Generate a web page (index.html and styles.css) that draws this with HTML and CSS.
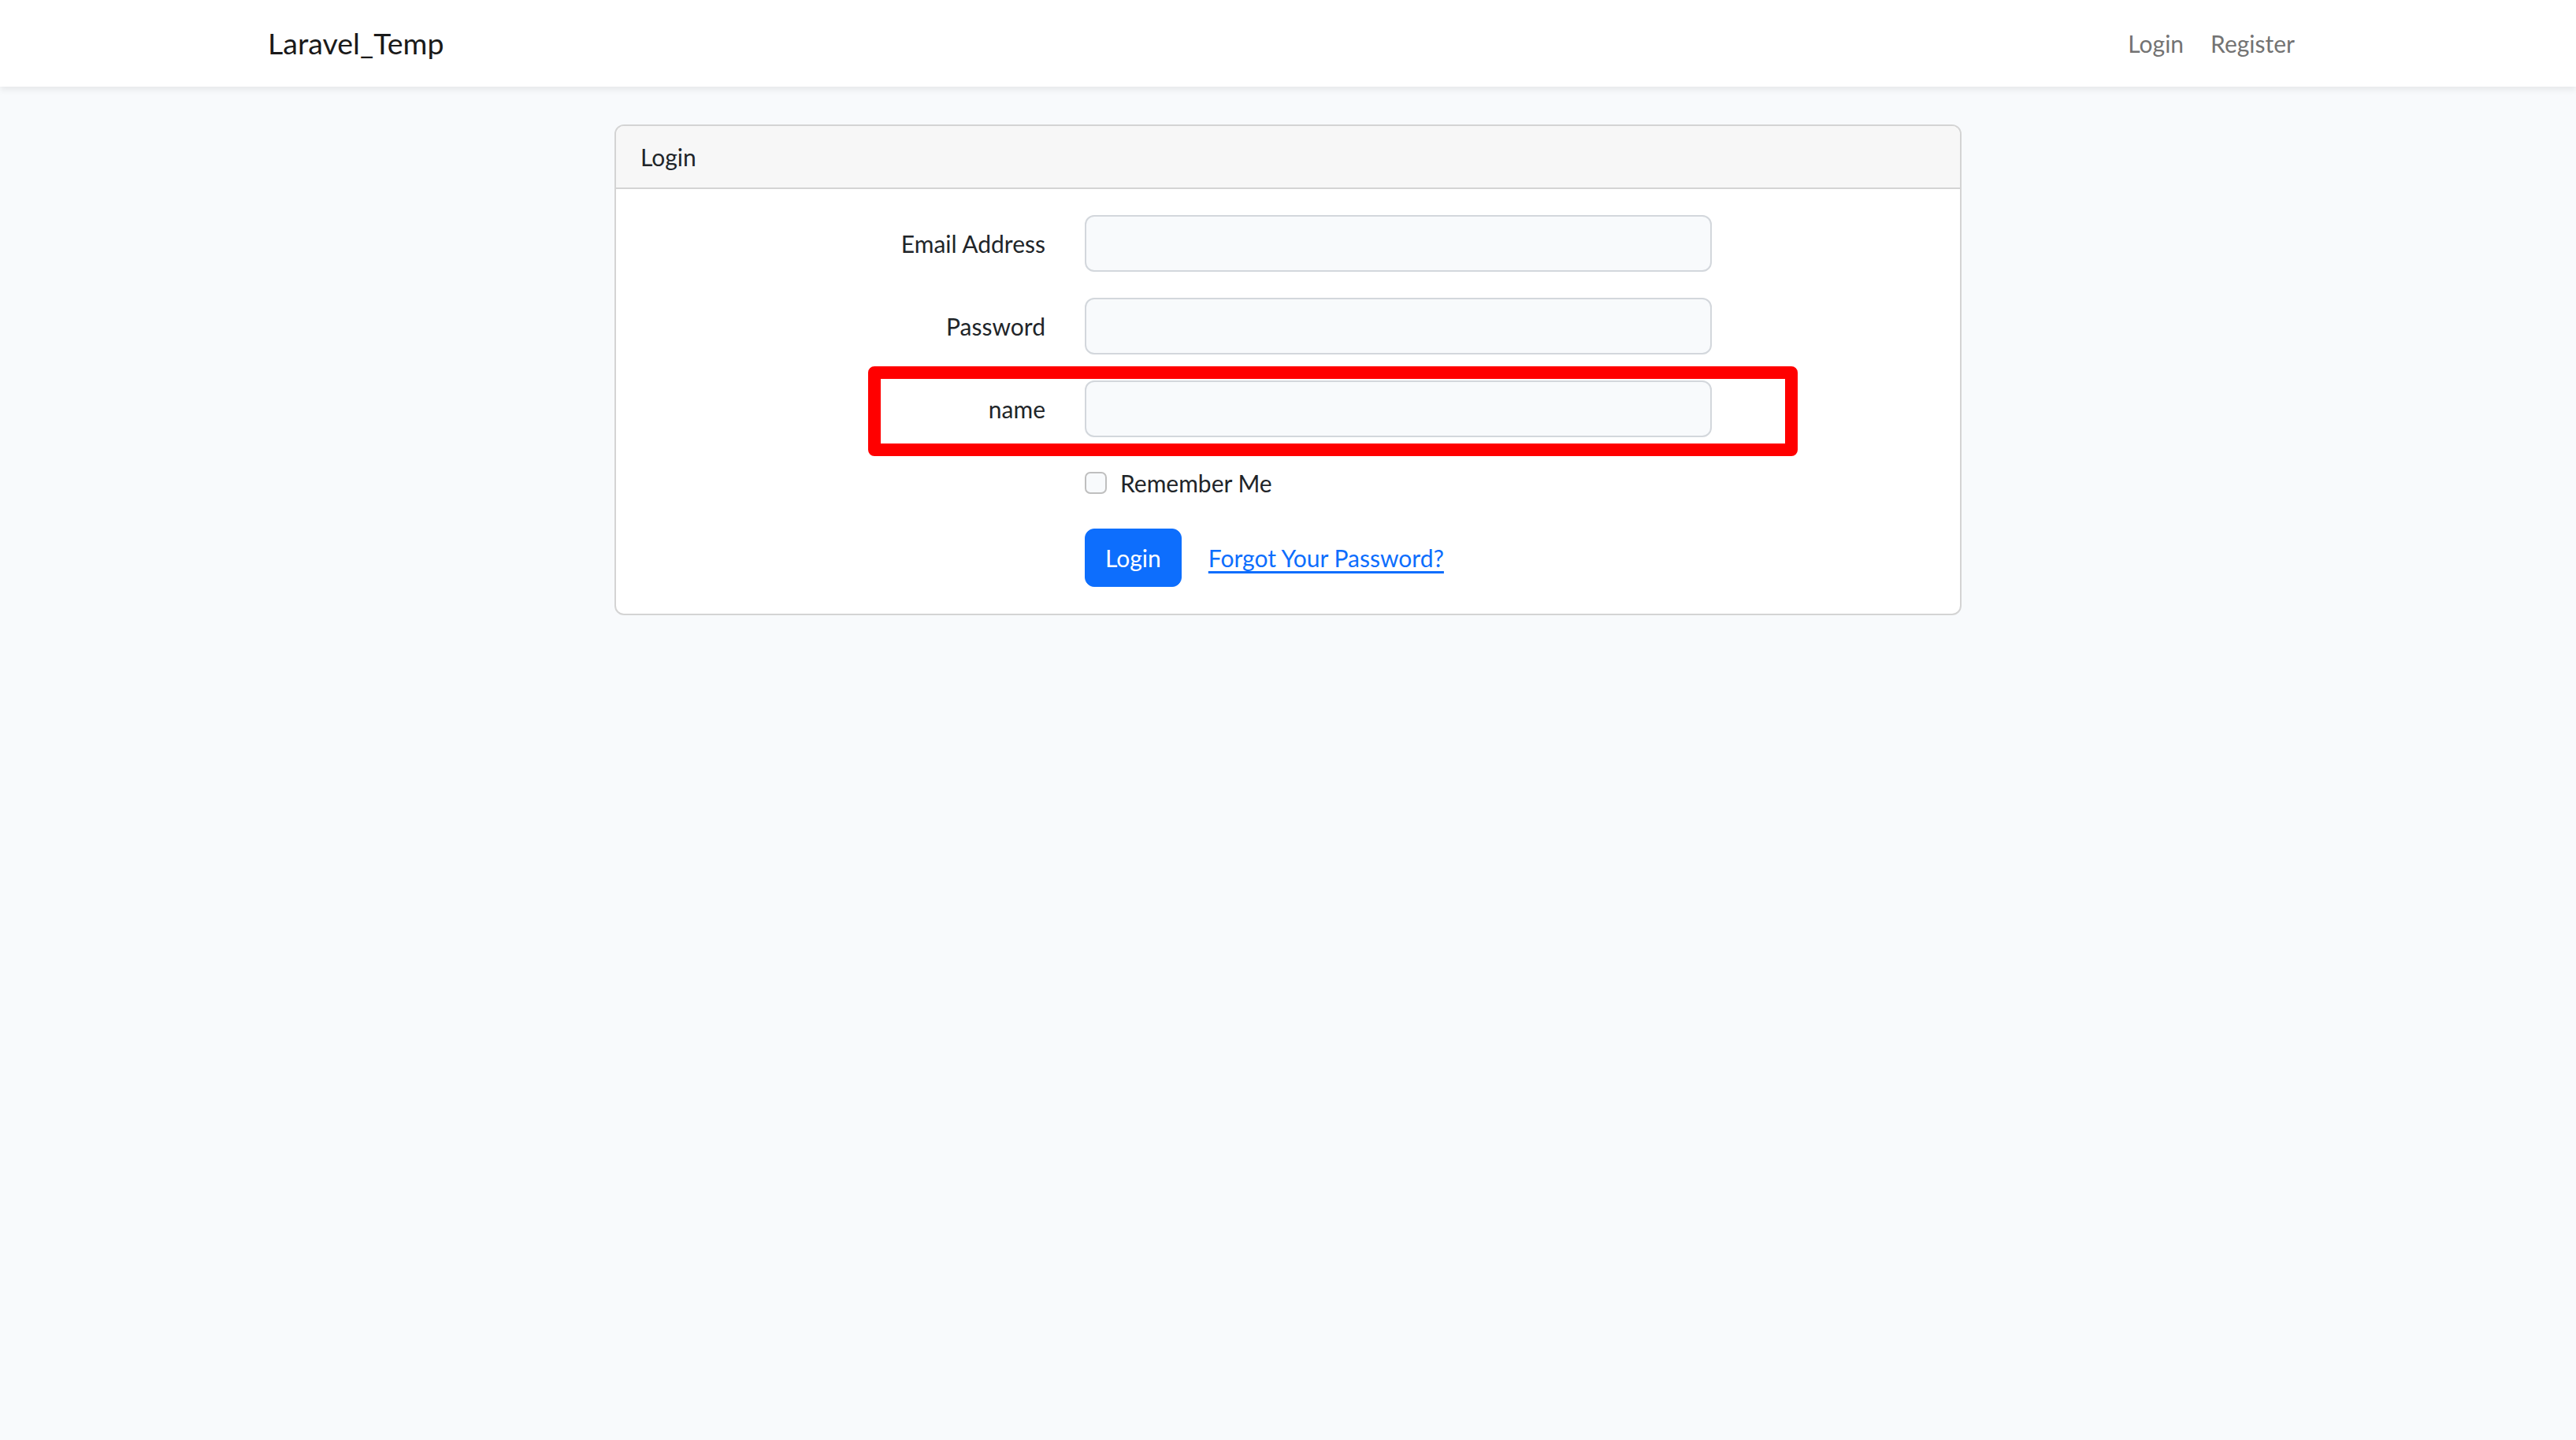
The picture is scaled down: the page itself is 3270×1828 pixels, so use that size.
FILE: index.html
```html
<!DOCTYPE html>
<html lang="en">
<head>
    <meta charset="UTF-8">
    <meta name="viewport" content="width=device-width, initial-scale=1.0">
    <title>Laravel_Temp</title>
    <link rel="stylesheet" href="styles.css">
</head>
<body>
    <nav class="navbar">
        <div class="container nav-inner">
            <a class="brand" href="#">Laravel_Temp</a>
            <ul class="nav-links">
                <li><a href="#">Login</a></li>
                <li><a href="#">Register</a></li>
            </ul>
        </div>
    </nav>

    <main class="page">
        <div class="card">
            <div class="card-header">Login</div>

            <form class="card-body">
                <div class="form-row">
                    <label for="email">Email Address</label>
                    <input id="email" type="email" class="form-control">
                </div>

                <div class="form-row">
                    <label for="password">Password</label>
                    <input id="password" type="password" class="form-control">
                </div>

                <!-- highlighted field -->
                <div class="form-row marked">
                    <label for="name">name</label>
                    <input id="name" type="text" class="form-control">
                    <span class="mark-box"></span>
                </div>

                <div class="form-row">
                    <span class="spacer"></span>
                    <div class="form-check">
                        <input type="checkbox" id="remember" class="check">
                        <label for="remember">Remember Me</label>
                    </div>
                </div>

                <div class="form-row last">
                    <span class="spacer"></span>
                    <div class="actions">
                        <button type="button" class="btn">Login</button>
                        <a href="#" class="btn-link">Forgot Your Password?</a>
                    </div>
                </div>
            </form>
        </div>
    </main>
</body>
</html>
```

FILE: styles.css
```css
* {
    box-sizing: border-box;
}
body {
    margin: 0;
    background: #f8fafc;
    color: #212529;
    font-family: Lato, "Noto Sans", sans-serif;
    font-size: 30px;
    line-height: 48px;
}
a {
    text-decoration: none;
}

/* top bar */
.navbar {
    background: #fff;
    height: 110px;
    box-shadow: 0 4px 8px rgba(0,0,0,0.075);
}
.container {
    width: 2590px;
    margin: 0 auto;
}
.nav-inner {
    height: 100%;
    display: flex;
    align-items: center;
    justify-content: space-between;
}
.brand {
    color: #1a1a1a;
    font-size: 37.5px;
    line-height: 60px;
}
.nav-links {
    list-style: none;
    margin: 0;
    padding: 0;
    display: flex;
}
.nav-links a {
    display: block;
    padding: 0 17px;
    color: #737373;
}

/* login card */
.page {
    padding-top: 48px;
}
.card {
    width: 1710px;
    margin: 0 auto;
    background: #fff;
    border: 2px solid #d4d4d4;
    border-radius: 12px;
}
.card-header {
    background: #f7f7f7;
    border-bottom: 2px solid #d4d4d4;
    border-radius: 10px 10px 0 0;
    padding: 15px 31px;
    height: 80px;
}
.card-body {
    padding: 33px 31px 34px;
}
.form-row {
    display: flex;
    align-items: center;
    gap: 50px;
    margin-bottom: 33px;
    position: relative;
}
.form-row.last {
    margin-bottom: 0;
}
.form-row label:first-child,
.spacer {
    width: 514px;
    flex: none;
    text-align: right;
}
.form-control {
    width: 796px;
    height: 72px;
    background: #f8fafc;
    border: 2px solid #d3d7dc;
    border-radius: 12px;
    font: inherit;
    padding: 12px 25px;
}
.form-row + .form-row {
    margin-top: 1px;
}

/* red annotation around the name field */
.mark-box {
    position: absolute;
    left: 289px;
    top: -18px;
    width: 1180px;
    height: 114px;
    border: 16px solid #ff0000;
    border-radius: 8px;
    pointer-events: none;
}

.form-check {
    display: flex;
    align-items: center;
    height: 50px;
}
.check {
    appearance: none;
    width: 28px;
    height: 28px;
    margin: 0 17px 0 0;
    background: #f8fafc;
    border: 2px solid #bfbfbf;
    border-radius: 7px;
}

.actions {
    display: flex;
    align-items: center;
}
.btn {
    background: #0d6efd;
    color: #fff;
    border: 1px solid #0d6efd;
    border-radius: 12px;
    font: inherit;
    line-height: 48px;
    padding: 12px 25px;
}
.btn-link {
    margin-left: 34px;
    color: #0d6efd;
    text-decoration: underline;
    text-underline-offset: 5px;
}
```
